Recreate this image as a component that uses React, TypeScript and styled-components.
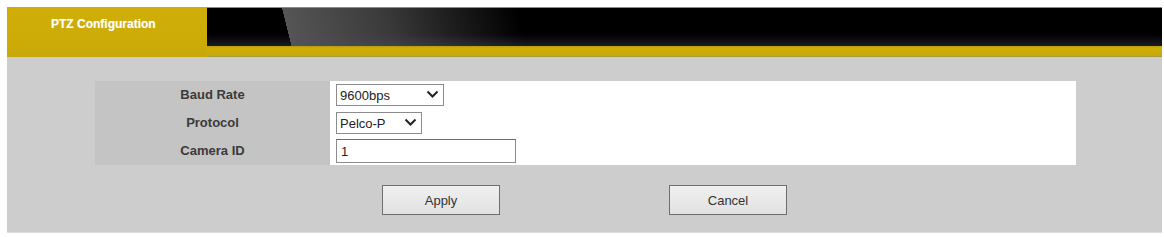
import React, { useState } from "react";
import styled, { createGlobalStyle } from "styled-components";

const GlobalStyle = createGlobalStyle`
  html, body {
    margin: 0;
    padding: 0;
    background: #ffffff;
    font-family: "Liberation Sans", Arial, sans-serif;
  }
`;

const Page = styled.div`
  padding: 7px 2px 4px 7px;
  width: 1155px;
`;

const Header = styled.div`
  display: flex;
  height: 50px;
`;

const Tab = styled.div`
  width: 200px;
  background: linear-gradient(to bottom, #cfae08 0%, #ccab07 80%, #c6a60a 100%);
  color: #ffffff;
  font-size: 12px;
  font-weight: bold;
  padding: 10px 0 0 44px;
  box-sizing: border-box;
  text-shadow: 0 0 1px rgba(255, 255, 255, 0.4);
`;

const HeaderRight = styled.div`
  flex: 1;
  display: flex;
  flex-direction: column;
`;

const DarkBand = styled.div`
  height: 39px;
  border-top: 1px solid #8a8a8a;
  box-sizing: border-box;
  background:
    linear-gradient(to bottom, rgba(0, 0, 0, 0) 70%, rgba(70, 80, 100, 0.35) 100%),
    linear-gradient(76deg, #000000 0 82px, #555555 82px, #3a3a3a 180px, #000000 310px);
`;

const YellowStripe = styled.div`
  flex: 1;
  background: linear-gradient(to bottom, #b89a10 0%, #cfae08 20%, #c9a90a 85%, #9c9a55 100%);
`;

const Panel = styled.div`
  background: #cdcdcd;
  height: 176px;
  border-bottom: 1px solid #dedede;
  box-sizing: border-box;
  padding: 24px 0 0 88px;
`;

const FormTable = styled.div`
  display: grid;
  grid-template-columns: 235px 746px;
  grid-auto-rows: 28px;
  width: 981px;
`;

const Label = styled.div`
  background: #c4c4c4;
  display: flex;
  align-items: center;
  justify-content: center;
  padding-bottom: 2px;
  font-size: 13px;
  font-weight: bold;
  color: #3a3a3a;
`;

const Field = styled.div`
  background: #ffffff;
  display: flex;
  align-items: center;
  padding-left: 6px;
`;

const SelectWrap = styled.div<{ $width: number }>`
  position: relative;
  width: ${(p) => p.$width}px;
  height: 22px;
`;

const Select = styled.select`
  appearance: none;
  width: 100%;
  height: 100%;
  border: 1px solid #8c8c8c;
  border-radius: 0;
  background: #ffffff;
  font-family: "Liberation Sans", Arial, sans-serif;
  font-size: 13px;
  color: #222222;
  padding: 0 0 0 3px;
  outline: none;
`;

const Chevron = styled.svg`
  position: absolute;
  right: 5px;
  top: 6px;
  pointer-events: none;
`;

const TextInput = styled.input`
  width: 180px;
  height: 24px;
  box-sizing: border-box;
  border: 1px solid #8c8c8c;
  border-top-color: #6a6a6a;
  font-family: "Liberation Sans", Arial, sans-serif;
  font-size: 13px;
  color: #222222;
  padding: 0 4px;
  outline: none;
`;

const ButtonRow = styled.div`
  display: flex;
  justify-content: center;
  gap: 169px;
  margin-top: 20px;
  margin-left: -88px;
`;

const Button = styled.button`
  width: 118px;
  height: 30px;
  background: linear-gradient(to bottom, #f0f0f0, #e2e2e2);
  border: 1px solid #6e6e6e;
  border-radius: 0;
  font-family: "Liberation Sans", Arial, sans-serif;
  font-size: 13px;
  color: #333333;
  cursor: pointer;
`;

const ChevronIcon = () => (
  <Chevron width="13" height="9" viewBox="0 0 13 9">
    <path d="M1.5 1.5 L6.5 6.5 L11.5 1.5" fill="none" stroke="#222" strokeWidth="2" />
  </Chevron>
);

export default function App() {
  const [baud, setBaud] = useState("9600");
  const [protocol, setProtocol] = useState("pelco-p");
  const [cameraId, setCameraId] = useState("1");

  return (
    <>
      <GlobalStyle />
      <Page>
        <Header>
          <Tab>PTZ Configuration</Tab>
          <HeaderRight>
            <DarkBand />
            <YellowStripe />
          </HeaderRight>
        </Header>
        <Panel>
          <FormTable>
            <Label>Baud Rate</Label>
            <Field>
              <SelectWrap $width={108}>
                <Select value={baud} onChange={(e) => setBaud(e.target.value)}>
                  <option value="2400">2400bps</option>
                  <option value="4800">4800bps</option>
                  <option value="9600">9600bps</option>
                  <option value="19200">19200bps</option>
                </Select>
                <ChevronIcon />
              </SelectWrap>
            </Field>
            <Label>Protocol</Label>
            <Field>
              <SelectWrap $width={86}>
                <Select value={protocol} onChange={(e) => setProtocol(e.target.value)}>
                  <option value="pelco-d">Pelco-D</option>
                  <option value="pelco-p">Pelco-P</option>
                </Select>
                <ChevronIcon />
              </SelectWrap>
            </Field>
            <Label>Camera ID</Label>
            <Field>
              <TextInput value={cameraId} onChange={(e) => setCameraId(e.target.value)} />
            </Field>
          </FormTable>
          <ButtonRow>
            <Button>Apply</Button>
            <Button>Cancel</Button>
          </ButtonRow>
        </Panel>
      </Page>
    </>
  );
}
